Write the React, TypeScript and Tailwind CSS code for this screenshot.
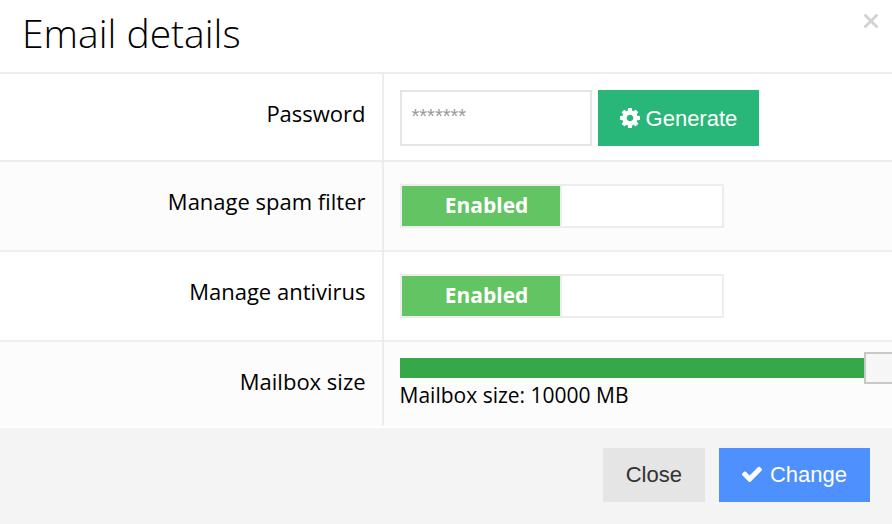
import { useState } from "react";
import type { ReactNode } from "react";

function CogIcon() {
  return (
    <svg viewBox="128 128 1536 1536" className="size-5 shrink-0" fill="currentColor" aria-hidden="true">
      <path d="M1152 896q0-106-75-181t-181-75-181 75-75 181 75 181 181 75 181-75 75-181zm512-109v222q0 12-8 23t-20 13l-185 28q-19 54-39 91 35 50 107 138 10 12 10 25t-9 23q-27 37-99 108t-94 71q-12 0-26-9l-138-108q-44 23-91 38-16 136-29 186-7 28-36 28h-222q-14 0-24.5-8.5t-11.5-21.5l-28-184q-49-16-90-37l-141 107q-10 9-25 9-14 0-25-11-126-114-165-168-7-10-7-23 0-12 8-23 15-21 51-66.5t54-70.5q-27-50-41-99l-183-27q-13-2-21-12.5t-8-23.5v-222q0-12 8-23t19-13l186-28q14-46 39-92-40-57-107-138-10-12-10-24 0-10 9-23 26-36 98.5-107.5t94.5-71.5q13 0 26 10l138 107q44-23 91-38 16-136 29-186 7-28 36-28h222q14 0 24.5 8.5t11.5 21.5l28 184q49 16 90 37l142-107q9-9 24-9 13 0 25 10 129 119 165 170 7 8 7 22 0 12-8 23-15 21-51 66.5t-54 70.5q26 50 41 98l183 28q13 2 21 12.5t8 23.5z" />
    </svg>
  );
}

function CheckIcon() {
  return (
    <svg viewBox="121 128 1550 1536" className="size-5 shrink-0" fill="currentColor" aria-hidden="true">
      <path d="M1671 566q0 40-28 68l-724 724-136 136q-28 28-68 28t-68-28l-136-136-362-362q-28-28-28-68t28-68l136-136q28-28 68-28t68 28l294 295 656-657q28-28 68-28t68 28l136 136q28 28 28 68z" />
    </svg>
  );
}

type RowProps = {
  label: string;
  htmlFor: string;
  className?: string;
  children: ReactNode;
};

function Row({ label, htmlFor, className = "", children }: RowProps) {
  return (
    <div className={`flex border-t-2 border-[#ededed] ${className}`}>
      <div className="w-[43%] shrink-0 border-r-2 border-[#ededed] px-4 pt-6 text-right">
        <label htmlFor={htmlFor} className="text-[22px] leading-[30px]">
          {label}
        </label>
      </div>
      <div className="min-w-0 flex-1 px-4">{children}</div>
    </div>
  );
}

function Toggle({ id }: { id: string }) {
  const [on, setOn] = useState(true);

  return (
    <label className="flex h-11 max-w-[324px] cursor-pointer border-2 border-[#ededed] bg-white">
      <input
        id={id}
        type="checkbox"
        className="sr-only"
        checked={on}
        onChange={(e) => setOn(e.target.checked)}
      />
      {on ? (
        <span className="flex w-40 items-center justify-center border-r-2 border-[#ededed] bg-[#62c462] bg-clip-padding pl-3 text-[21px] font-bold text-white">
          Enabled
        </span>
      ) : (
        <span className="ml-auto flex w-40 items-center justify-center bg-gray-200 text-[21px] font-bold">
          Disabled
        </span>
      )}
    </label>
  );
}

export default function App() {
  const [password, setPassword] = useState("");
  const [size, setSize] = useState(10000);

  const generate = () => setPassword(Math.random().toString(36).slice(2, 12));

  return (
    <div className="min-h-screen overflow-hidden bg-[#f4f4f4] font-['Open_Sans',sans-serif] text-black">
      <form className="bg-white" id="email-form" onSubmit={(e) => e.preventDefault()}>
        <header className="flex items-start justify-between pr-3 pl-[22px]">
          <h1 className="pt-2 pb-3.5 text-[39px] leading-[50px] font-light">Email details</h1>
          <button type="button" aria-label="Close dialog" className="mt-3 p-0.5 text-[#d2d2d2]">
            <svg viewBox="0 0 14 14" className="size-[14px]" stroke="currentColor" strokeWidth="2.8" aria-hidden="true">
              <path d="M0.5 0.5 13.5 13.5M13.5 0.5 0.5 13.5" />
            </svg>
          </button>
        </header>

        <Row label="Password" htmlFor="password">
          <div className="flex gap-1.5 pt-4 pb-3.5 font-['Liberation_Sans',sans-serif]">
            <input
              id="password"
              type="text"
              placeholder="*******"
              value={password}
              onChange={(e) => setPassword(e.target.value)}
              className="h-14 w-48 min-w-0 border-2 border-[#e5e5e5] bg-white px-2.5 pb-1 text-xl placeholder:text-[#999]"
            />
            <button
              type="button"
              onClick={generate}
              className="flex h-14 items-center gap-1.5 bg-[#28b779] px-[22px] text-[22px] text-white"
            >
              <CogIcon />
              Generate
            </button>
          </div>
        </Row>

        <Row label="Manage spam filter" htmlFor="spam" className="bg-[#fcfcfc]">
          <div className="py-[22px]">
            <Toggle id="spam" />
          </div>
        </Row>

        <Row label="Manage antivirus" htmlFor="antivirus">
          <div className="py-[22px]">
            <Toggle id="antivirus" />
          </div>
        </Row>

        <Row label="Mailbox size" htmlFor="size" className="bg-[#fcfcfc]">
          <div className="pt-2.5 pb-5">
            {/* the handle hangs over the right edge at full size */}
            <div className="-mr-6 flex">
              <input
                id="size"
                type="range"
                min={0}
                max={10000}
                step={100}
                value={size}
                onChange={(e) => setSize(Number(e.target.value))}
                className="h-8 w-full appearance-none bg-transparent [&::-webkit-slider-runnable-track]:h-5 [&::-webkit-slider-runnable-track]:bg-[#37a849] [&::-webkit-slider-thumb]:-mt-1.5 [&::-webkit-slider-thumb]:h-8 [&::-webkit-slider-thumb]:w-9 [&::-webkit-slider-thumb]:appearance-none [&::-webkit-slider-thumb]:border-2 [&::-webkit-slider-thumb]:border-[#c8c8c8] [&::-webkit-slider-thumb]:bg-[#f6f6f6]"
              />
            </div>
            <p className="text-[21px] leading-[22px]">Mailbox size: {size} MB</p>
          </div>
        </Row>
        <div className="h-0.5 bg-white" />
      </form>

      <footer className="flex justify-end gap-3.5 px-[22px] py-5 font-['Liberation_Sans',sans-serif] text-[22px]">
        <button type="button" className="h-[54px] bg-[#e5e5e5] px-[23px] pb-0.5 text-[#333]">
          Close
        </button>
        <button
          type="submit"
          form="email-form"
          className="flex h-[54px] items-center gap-2 bg-[#4d90fe] px-[23px] pb-0.5 text-white"
        >
          <CheckIcon />
          Change
        </button>
      </footer>
    </div>
  );
}
